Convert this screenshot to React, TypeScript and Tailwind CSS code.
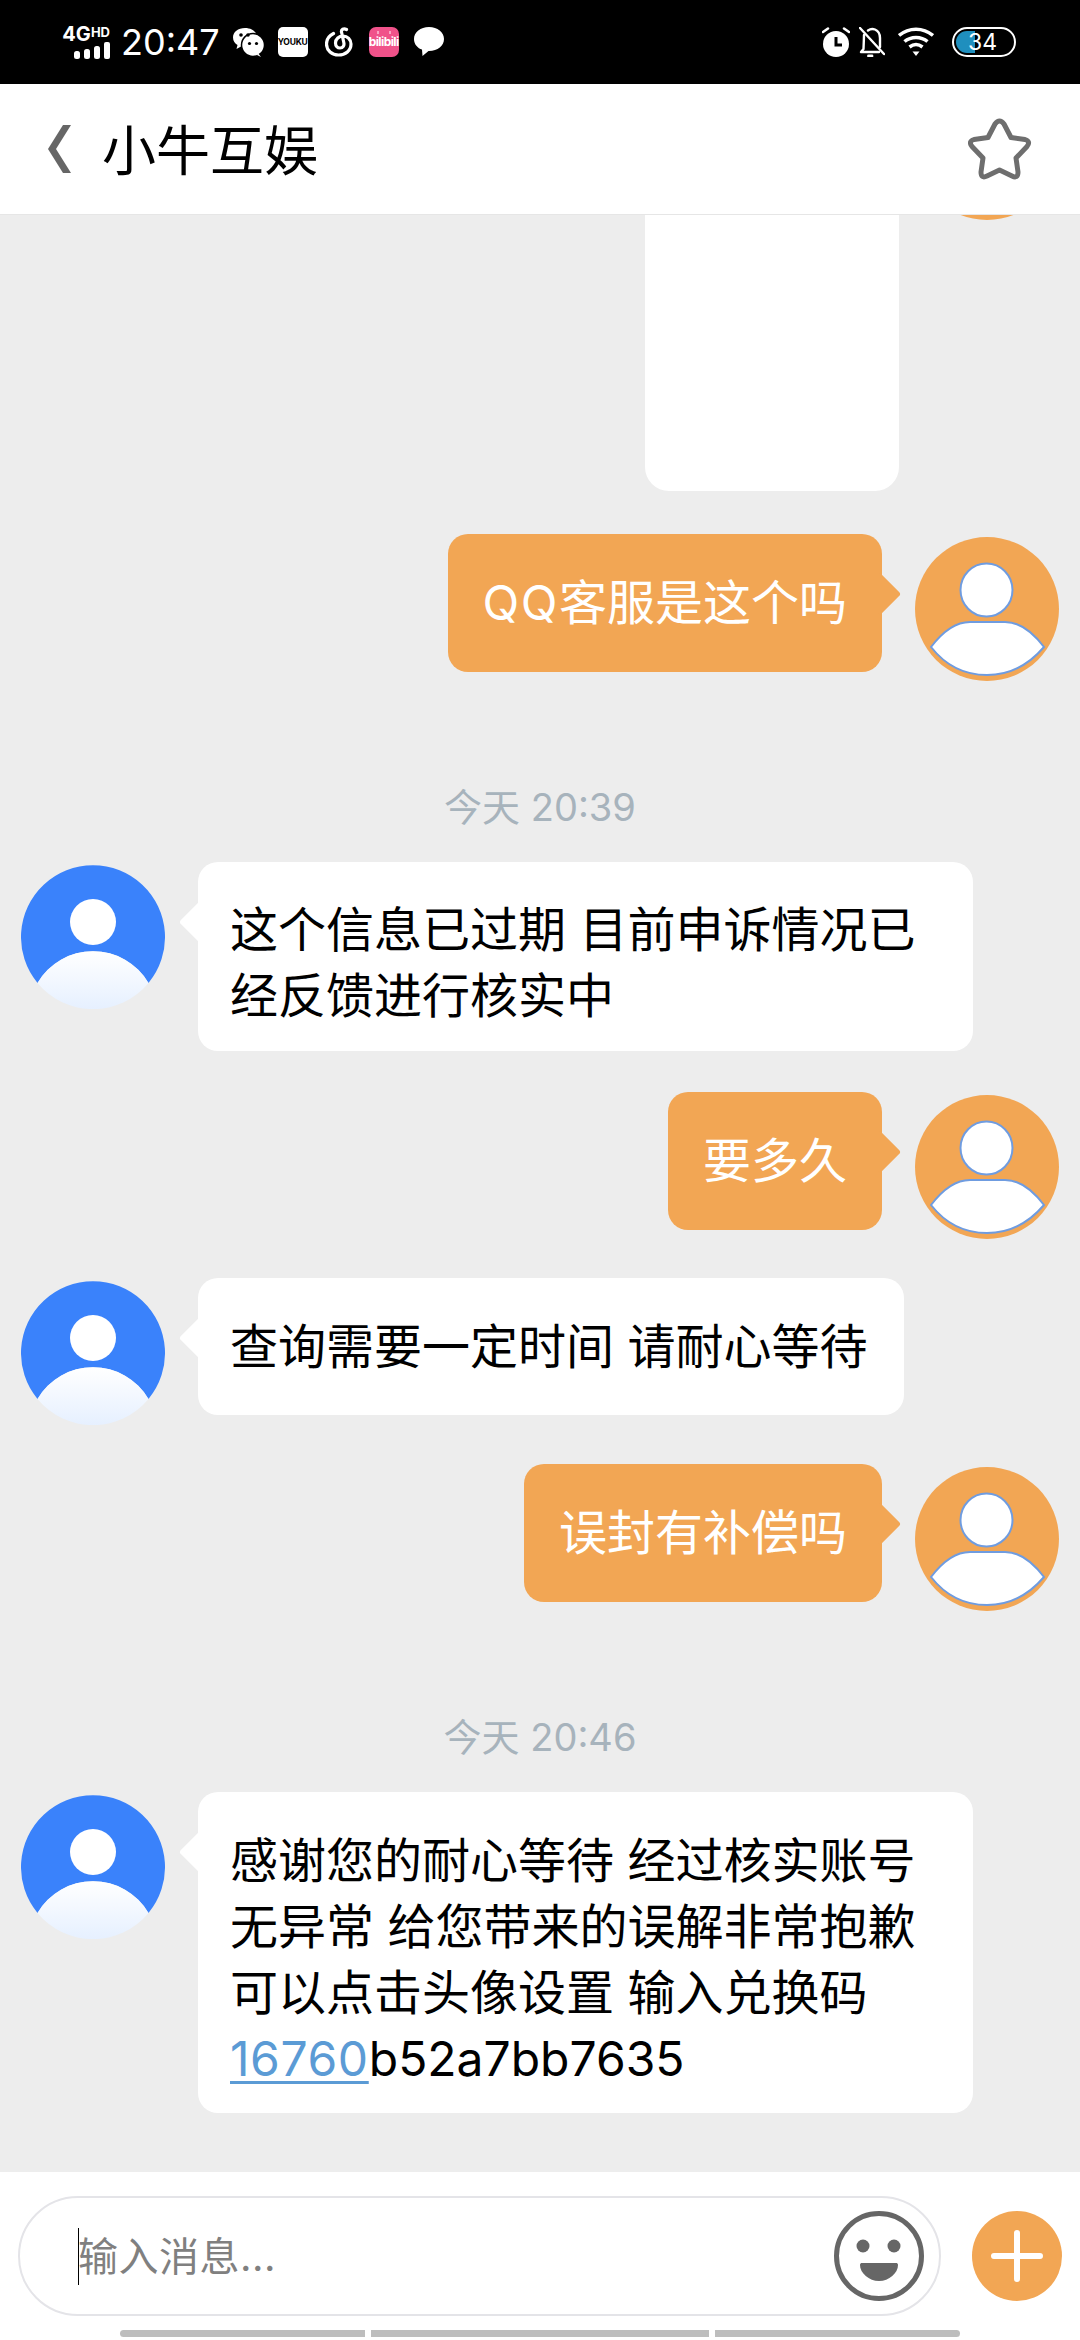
import type { ReactNode } from "react";

function StatusLeft() {
  return (
    <div className="flex items-center">
      {/* network badge */}
      <div className="flex w-[47px] flex-col items-end text-white">
        <div className="flex h-[16px] items-start leading-[16px] font-bold">
          <span className="text-[20px]">4G</span>
          <span className="text-[13px] leading-[12px]">HD</span>
        </div>
        <svg width="36" height="17" viewBox="0 0 36 17" fill="#fff">
          <rect x="0" y="9" width="6" height="8" rx="2.5" />
          <rect x="10" y="7" width="6" height="10" rx="2.5" />
          <rect x="20" y="4" width="6" height="13" rx="2.5" />
          <rect x="30" y="0" width="6" height="17" rx="2" />
        </svg>
      </div>
      <span className="ml-[11px] text-[36px] leading-[38px] text-white">20:47</span>

      <svg className="ml-[13px]" width="31" height="30" viewBox="0 0 31 30">
        <path d="M12 1C5 1 0 5 0 10.500C0 14 2 16.500 4.500 18L3.500 22L8 19.500C10 20 11 20 13 20C20 20 24 15.500 24 10.500C24 5 19 1 12 1Z" fill="#fff" />
        <circle cx="20" cy="18" r="11.500" fill="#fff" stroke="#000" strokeWidth="1.500" />
        <path d="M25 26L28 30L24 28Z" fill="#fff" />
        <circle cx="8" cy="8" r="1.800" fill="#000" />
        <circle cx="15" cy="8" r="1.800" fill="#000" />
        <circle cx="16.500" cy="16.500" r="1.600" fill="#000" />
        <circle cx="23.500" cy="16.500" r="1.600" fill="#000" />
      </svg>

      <div className="ml-[14px] flex h-[30px] w-[30px] items-center justify-center rounded-[5px] bg-white text-[8.500px] font-bold tracking-[-0.2px] text-black">
        YOUKU
      </div>

      <svg className="ml-[17px]" width="28" height="30" viewBox="0 0 28 30" fill="none" stroke="#fff" strokeLinecap="round">
        <path d="M8.500 6.500C3.500 9 1.500 13 1.500 17C1.500 23.500 7 28 13.500 28C20.500 28 26 23.500 26 17C26 12.500 22.500 9 18 9C14 9 10.500 12 10.500 16C10.500 19 12.500 21 15 21C18 21 19.500 18.500 18.800 15.500L16.500 5C16 2.500 18.500 1 21.500 2.500" strokeWidth="3.200" />
      </svg>

      {/* bilibili tile with its little tv antennas */}
      <div className="relative ml-[16px] flex h-[30px] w-[30px] items-center justify-center rounded-[7px] bg-[#f0528a] text-[12px] leading-none font-bold tracking-[-0.6px] text-white">
        <div className="absolute top-[4px] left-[8px] h-[3px] w-[2px] bg-[#f9a5c3]" />
        <div className="absolute top-[4px] right-[8px] h-[3px] w-[2px] bg-[#f9a5c3]" />
        bilibili
      </div>

      <svg className="ml-[15px]" width="30" height="30" viewBox="0 0 30 30" fill="#fff">
        <path d="M15 0C6.500 0 0 5.200 0 12C0 17.500 3.800 21.200 8 22.600L8.500 29L14.500 24C23.500 24.200 30 19 30 12C30 5.200 23.500 0 15 0Z" />
      </svg>
    </div>
  );
}

function StatusRight() {
  return (
    <div className="flex items-center">
      <svg width="28" height="30" viewBox="0 0 28 30">
        <circle cx="14" cy="17" r="13" fill="#fff" />
        <path d="M14 10V18H20" fill="none" stroke="#000" strokeWidth="3" />
        <path d="M1 5L6 1.500M27 5L22 1.500" stroke="#fff" strokeWidth="2.500" strokeLinecap="round" />
      </svg>
      <svg className="ml-[9px]" width="26" height="30" viewBox="0 0 26 30" fill="none" stroke="#fff" strokeWidth="2.400" strokeLinecap="round" strokeLinejoin="round">
        <path d="M1 1L25 27" />
        <path d="M5 8C5 10 4.500 22 4.500 22L2 25H20" />
        <path d="M9 3.500C11 2 13.500 1.500 16 2.500C19.500 4 21 7 21 11V20" />
        <path d="M9.500 29H13" strokeWidth="2.800" />
      </svg>
      <svg className="ml-[13px]" width="36" height="30" viewBox="0 0 36 30" fill="none" stroke="#fff" strokeWidth="3.500">
        <path d="M1 8.500C11 0 25 0 35 8.500" />
        <path d="M6.500 14.500C13 9 23 9 29.500 14.500" />
        <path d="M11.500 20C15.500 17 20.500 17 24.500 20" />
        <path d="M14.500 24.500H21.500L18 29Z" fill="#fff" stroke="none" />
      </svg>
      <div className="relative ml-[18px] flex h-[30px] w-[64px] items-center overflow-hidden rounded-full border-2 border-white">
        <div className="absolute inset-y-[2px] left-[2px] w-[19px] rounded-l-full bg-[#1f8fbe]" />
        <span className="relative ml-[14px] text-[23px] leading-none text-white">34</span>
      </div>
    </div>
  );
}

function PersonAvatar() {
  return (
    <svg className="mt-[3px] shrink-0" width="144" height="144" viewBox="0 0 144 144">
      <defs>
        <linearGradient id="person-body" x1="0" y1="0" x2="0" y2="1">
          <stop offset="0" stopColor="#ffffff" />
          <stop offset="1" stopColor="#e6f0ff" />
        </linearGradient>
      </defs>
      {/* blue stops at the shoulders so no rim shows under the body */}
      <path d="M16.500 118A72 72 0 1 1 127.500 118A64.300 64.300 0 0 0 16.500 118Z" fill="#3a82fb" />
      <circle cx="72" cy="57" r="23" fill="#fff" />
      <path d="M16.500 118A64.300 64.300 0 0 1 127.500 118A72 72 0 0 1 16.500 118Z" fill="url(#person-body)" />
    </svg>
  );
}

function MeAvatar() {
  return (
    <svg className="mt-[3px] shrink-0" width="144" height="144" viewBox="0 0 144 144">
      <circle cx="72" cy="72" r="72" fill="#f2a654" />
      <ellipse cx="71.500" cy="53" rx="26" ry="26.500" fill="#fff" stroke="#6f9ce0" strokeWidth="2" />
      <path d="M16 110Q35 85 55 85H90Q110 85 129 110Q105 138 72 138Q38 138 16 110Z" fill="#fff" stroke="#6f9ce0" strokeWidth="2" />
    </svg>
  );
}

function Incoming({ children, className }: { children: ReactNode; className: string }) {
  return (
    <div className={`flex items-start pl-[21px] ${className}`}>
      <PersonAvatar />
      <div className="relative ml-[33px] rounded-[20px] bg-white text-black">
        <div className="absolute top-[45px] -left-[13px] h-[30px] w-[30px] rotate-45 rounded-[3px] bg-white" />
        <div className="relative">{children}</div>
      </div>
    </div>
  );
}

function Outgoing({ children, className }: { children: ReactNode; className: string }) {
  return (
    <div className={`flex items-start justify-end pr-[21px] ${className}`}>
      <div className="relative mr-[33px] flex h-[138px] items-center rounded-[20px] bg-[#f2a654] px-[35px] text-white">
        <div className="absolute top-[45px] -right-[13px] h-[30px] w-[30px] rotate-45 rounded-[3px] bg-[#f2a654]" />
        <span className="relative whitespace-nowrap">{children}</span>
      </div>
      <MeAvatar />
    </div>
  );
}

function TimeLabel({ text, className }: { text: string; className: string }) {
  return <div className={`h-[40px] text-center text-[38px] leading-[40px] text-[#a7b3bc] ${className}`}>{text}</div>;
}

export default function App() {
  return (
    <div
      lang="zh-CN"
      className="flex h-[2340px] w-[1080px] flex-col overflow-hidden bg-[#ededed] font-['Inter','Noto_Sans_CJK_SC',sans-serif] text-[48px] leading-[66px]"
    >
      <div className="flex h-[84px] shrink-0 items-center justify-between bg-black pr-[64px] pl-[63px]">
        <StatusLeft />
        <StatusRight />
      </div>

      <header className="flex h-[131px] shrink-0 items-center justify-between border-b border-[#e6e6e6] bg-white px-[48px]">
        <div className="flex items-center">
          <svg width="24" height="48" viewBox="0 0 24 48" fill="#666">
            <path d="M23 0H15L0 24L15 48H23L8 24Z" />
          </svg>
          <h1 className="mt-[5px] ml-[30px] text-[54px] leading-[66px] font-normal text-black">小牛互娱</h1>
        </div>
        <svg width="64" height="63" viewBox="0 0 64 63" fill="none" stroke="#6e6e6e" strokeWidth="5" strokeLinejoin="round">
          <path d="M27 6Q31.500 0 36 6L43 19.500L57 21.500Q63 23.500 59 28.500L48 40L50 54Q50 61 44 58L31.500 52L19 58Q13 61 13 54L15 40L4 28.500Q0 23.500 6 21.500L20 19.500Z" />
        </svg>
      </header>

      {/* scrolled message list, the oldest row runs under the header */}
      <main className="min-h-0 flex-1 overflow-hidden">
        <div className="-mt-[142px] flex items-start justify-end pr-[21px]">
          <div className="mr-[16px] h-[418px] w-[254px] rounded-[24px] bg-white" />
          <MeAvatar />
        </div>

        <Outgoing className="mt-[43px]">
          <span className="tracking-[1.5px]">QQ</span>客服是这个吗
        </Outgoing>
        <TimeLabel text="今天 20:39" className="mt-[106px]" />

        <Incoming className="mt-[35px]">
          <div className="w-[775px] pt-[35px] pr-[32px] pb-[22px] pl-[32px] whitespace-nowrap">
            这个信息已过期 目前申诉情况已
            <br />
            经反馈进行核实中
          </div>
        </Incoming>

        <Outgoing className="mt-[41px]">要多久</Outgoing>

        <Incoming className="mt-[39px]">
          <div className="flex h-[137px] w-[706px] items-center pl-[32px] whitespace-nowrap">查询需要一定时间 请耐心等待</div>
        </Incoming>

        <Outgoing className="mt-[39px]">误封有补偿吗</Outgoing>
        <TimeLabel text="今天 20:46" className="mt-[106px]" />

        <Incoming className="mt-[35px]">
          <div className="w-[775px] pt-[36px] pr-[32px] pb-[21px] pl-[32px] whitespace-nowrap">
            感谢您的耐心等待 经过核实账号
            <br />
            无异常 给您带来的误解非常抱歉
            <br />
            可以点击头像设置 输入兑换码
            <br />
            <span className="tracking-[0.6px] text-[#5b9bd5] underline decoration-[3px] underline-offset-[5px]">16760</span>b52a7bb7635
          </div>
        </Incoming>
      </main>

      <footer className="flex h-[168px] shrink-0 flex-col bg-white pt-[24px]">
        <div className="flex items-center px-[18px]">
          <div className="flex h-[120px] w-[923px] items-center rounded-full border-2 border-[#e4e4e8] pr-[15px] pl-[58px]">
            <div className="h-[57px] w-[1px] bg-black" />
            <span className="-ml-[1px] flex-1 pt-[2px] text-[40px] tracking-[0.5px] text-[#808080]">输入消息...</span>
            <svg width="90" height="90" viewBox="0 0 90 90">
              <circle cx="45" cy="45" r="42.500" fill="none" stroke="#666" strokeWidth="5" />
              <circle cx="29" cy="35" r="6.500" fill="#666" />
              <circle cx="60" cy="35" r="6.500" fill="#666" />
              <path d="M26 54C26 52.500 27 52 28 52H62C63 52 64 52.500 64 54C64 62 55 70 45 70C35 70 26 62 26 54Z" fill="#666" />
            </svg>
          </div>
          <svg className="ml-[31px]" width="90" height="90" viewBox="0 0 90 90">
            <circle cx="45" cy="45" r="45" fill="#f2a654" />
            <path d="M45 22V68M22 45H68" stroke="#fff" strokeWidth="6" strokeLinecap="round" />
          </svg>
        </div>
        <div className="mt-[14px] flex justify-center gap-[6px]">
          <div className="h-[7px] w-[245px] rounded-l-full bg-[#bdbdbd]" />
          <div className="h-[7px] w-[338px] bg-[#bdbdbd]" />
          <div className="h-[7px] w-[245px] rounded-r-full bg-[#bdbdbd]" />
        </div>
      </footer>
    </div>
  );
}
